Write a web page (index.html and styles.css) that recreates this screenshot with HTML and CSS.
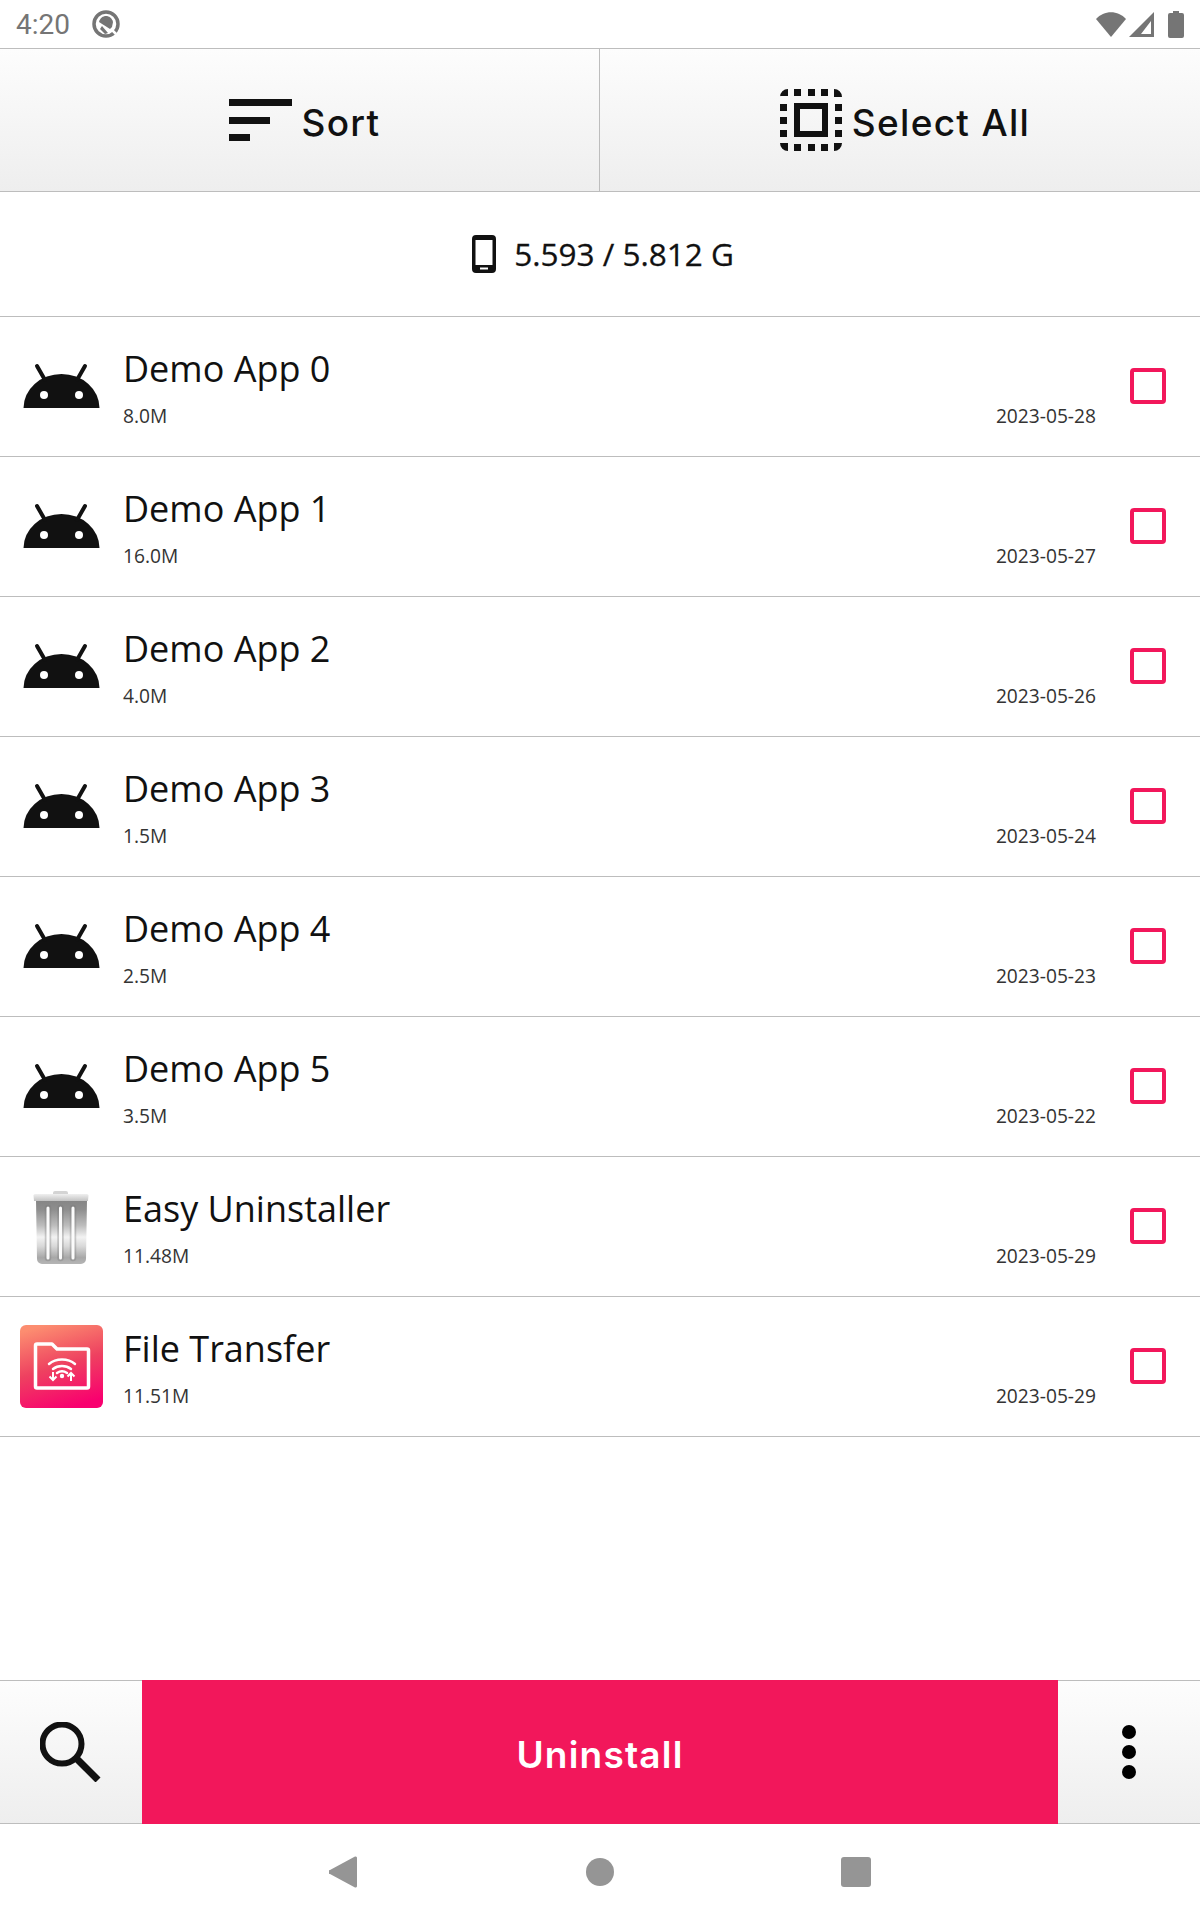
FILE: index.html
```html
<!DOCTYPE html>
<html lang="en">
<head>
  <meta charset="UTF-8">
  <meta name="viewport" content="width=device-width, initial-scale=1.0">
  <title>Easy Uninstaller</title>
  <link rel="stylesheet" href="styles.css">
</head>
<body>
  <svg class="defs" width="0" height="0">
    <symbol id="android" viewBox="0 0 84 84">
      <path d="M3.500 63a38 34 0 0 1 76 0z"/>
      <path d="M17 21l8 14M65 21l-8 14" stroke="#111" stroke-width="4" stroke-linecap="round"/>
      <circle cx="24" cy="50" r="4" fill="#fff"/>
      <circle cx="59" cy="50" r="4" fill="#fff"/>
    </symbol>
  </svg>

  <div class="app">
    <div class="status-bar">
      <div class="status-left">
        <span class="clock">4:20</span>
        <svg width="30" height="30" viewBox="0 0 30 30">
          <circle cx="15" cy="15" r="12" fill="none" stroke="#757575" stroke-width="3.500"/>
          <path d="M8 13c1-4 4-6 7-6s6 2 7 6l-1 5-2 2z" fill="#757575"/>
          <path d="M9 20l2-3 6 7-3 1z" fill="#757575"/>
          <path d="M21 21l4 4" stroke="#fff" stroke-width="2.500"/>
        </svg>
      </div>
      <div class="status-right">
        <svg width="30" height="25" viewBox="0 0 30 25"><path d="M0 7C8-2 22-2 30 7L15 25z" fill="#757575"/></svg>
        <svg width="25" height="25" viewBox="0 0 25 25"><path d="M25 0v25H0zM22 9L12 22h10z" fill="#757575" fill-rule="evenodd"/></svg>
        <svg width="16" height="27" viewBox="0 0 16 27"><path d="M5 0h6v2h3a2 2 0 0 1 2 2v21a2 2 0 0 1-2 2H2a2 2 0 0 1-2-2V4a2 2 0 0 1 2-2h3z" fill="#757575"/></svg>
      </div>
    </div>

    <div class="toolbar">
      <button class="tool-btn">
        <svg width="63" height="42" viewBox="0 0 63 42">
          <rect y="0" width="63" height="7"/>
          <rect y="18" width="41" height="7"/>
          <rect y="35" width="21" height="7"/>
        </svg>
        <span>Sort</span>
      </button>
      <button class="tool-btn">
        <svg width="62" height="62" viewBox="0 0 62 62">
          <path d="M0 8a8 8 0 0 1 8-8v7H0zM54 0a8 8 0 0 1 8 8h-8zM0 54h8v8a8 8 0 0 1-8-8zM54 54h8a8 8 0 0 1-8 8z"/>
          <path d="M14 0h7v7h-7zM28 0h7v7h-7zM41 0h7v7h-7zM14 55h7v7h-7zM28 55h7v7h-7zM41 55h7v7h-7zM0 15h7v7H0zM0 28h7v7H0zM0 41h7v7H0zM55 15h7v7h-7zM55 28h7v7h-7zM55 41h7v7h-7z"/>
          <path d="M14 14h34v34H14zM20 20v22h22V20z" fill-rule="evenodd"/>
        </svg>
        <span>Select All</span>
      </button>
    </div>

    <div class="storage">
      <svg width="24" height="38" viewBox="0 0 24 38">
        <path d="M4 0h16a4 4 0 0 1 4 4v30a4 4 0 0 1-4 4H4a4 4 0 0 1-4-4V4a4 4 0 0 1 4-4zM3.500 5v25h17V5zM8 32.500v2h8v-2z" fill="#111" fill-rule="evenodd"/>
      </svg>
      <span class="storage-text">5.593 / 5.812 G</span>
    </div>

    <ul class="app-list">
      <li class="app-row">
        <svg class="app-icon"><use href="#android"/></svg>
        <div class="app-info">
          <div class="app-name">Demo App 0</div>
          <div class="app-meta"><span>8.0M</span><span>2023-05-28</span></div>
        </div>
        <span class="checkbox"></span>
      </li>
      <li class="app-row">
        <svg class="app-icon"><use href="#android"/></svg>
        <div class="app-info">
          <div class="app-name">Demo App 1</div>
          <div class="app-meta"><span>16.0M</span><span>2023-05-27</span></div>
        </div>
        <span class="checkbox"></span>
      </li>
      <li class="app-row">
        <svg class="app-icon"><use href="#android"/></svg>
        <div class="app-info">
          <div class="app-name">Demo App 2</div>
          <div class="app-meta"><span>4.0M</span><span>2023-05-26</span></div>
        </div>
        <span class="checkbox"></span>
      </li>
      <li class="app-row">
        <svg class="app-icon"><use href="#android"/></svg>
        <div class="app-info">
          <div class="app-name">Demo App 3</div>
          <div class="app-meta"><span>1.5M</span><span>2023-05-24</span></div>
        </div>
        <span class="checkbox"></span>
      </li>
      <li class="app-row">
        <svg class="app-icon"><use href="#android"/></svg>
        <div class="app-info">
          <div class="app-name">Demo App 4</div>
          <div class="app-meta"><span>2.5M</span><span>2023-05-23</span></div>
        </div>
        <span class="checkbox"></span>
      </li>
      <li class="app-row">
        <svg class="app-icon"><use href="#android"/></svg>
        <div class="app-info">
          <div class="app-name">Demo App 5</div>
          <div class="app-meta"><span>3.5M</span><span>2023-05-22</span></div>
        </div>
        <span class="checkbox"></span>
      </li>
      <li class="app-row">
        <svg class="app-icon" viewBox="0 0 84 84">
          <defs>
            <linearGradient id="metal" x1="0" y1="0" x2="0" y2="1">
              <stop offset="0" stop-color="#858585"/>
              <stop offset="0.15" stop-color="#8e8e8e"/>
              <stop offset="0.4" stop-color="#bdbdbd"/>
              <stop offset="0.58" stop-color="#f2f2f2"/>
              <stop offset="0.72" stop-color="#d9d9d9"/>
              <stop offset="0.9" stop-color="#a8a8a8"/>
              <stop offset="1" stop-color="#b5b5b5"/>
            </linearGradient>
            <linearGradient id="lid" x1="0" y1="0" x2="0" y2="1">
              <stop offset="0" stop-color="#f0f0f0"/>
              <stop offset="1" stop-color="#c2c2c2"/>
            </linearGradient>
          </defs>
          <path d="M33 10V8a2 2 0 0 1 2-2h11a2 2 0 0 1 2 2v2z" fill="#d4d4d4"/>
          <path d="M16 15h51l-1 59a5 5 0 0 1-5 5H22a5 5 0 0 1-5-5z" fill="url(#metal)"/>
          <path d="M15 9h52a1.500 1.500 0 0 1 1.500 1.500L68 16H14l-.500-5.500A1.500 1.500 0 0 1 15 9z" fill="url(#lid)"/>
          <path d="M28 23v50M40.500 23v50M53 23v50" stroke="#777" stroke-opacity="0.350" stroke-width="6.500" stroke-linecap="round"/>
          <path d="M28 23v50M40.500 23v50M53 23v50" stroke="#fbfbfb" stroke-width="3" stroke-linecap="round"/>
        </svg>
        <div class="app-info">
          <div class="app-name">Easy Uninstaller</div>
          <div class="app-meta"><span>11.48M</span><span>2023-05-29</span></div>
        </div>
        <span class="checkbox"></span>
      </li>
      <li class="app-row">
        <svg class="app-icon" viewBox="0 0 84 84">
          <defs>
            <linearGradient id="pinkish" x1="0.3" y1="0" x2="0.6" y2="1">
              <stop offset="0" stop-color="#fc8d70"/>
              <stop offset="0.5" stop-color="#ee4160"/>
              <stop offset="1" stop-color="#f9006f"/>
            </linearGradient>
          </defs>
          <rect width="83" height="83" rx="6" fill="url(#pinkish)"/>
          <path d="M17 19h15l5 5h30a1.500 1.500 0 0 1 1.500 1.500v36a1.500 1.500 0 0 1-1.500 1.500H17a1.500 1.500 0 0 1-1.500-1.500v-41A1.500 1.500 0 0 1 17 19z" fill="none" stroke="#fff" stroke-width="3.500" stroke-linejoin="round"/>
          <path d="M29 39c7-6 19-6 26 0M33 44c5-4 13-4 18 0M37 48c3-2 7-2 10 0" fill="none" stroke="#fff" stroke-width="2.500" stroke-linecap="round"/>
          <circle cx="42" cy="51" r="2.200" fill="#fff"/>
          <path d="M33 47v8M29.500 51.500l3.500 3.500 3.500-3.500M51 56v-8M47.500 51.500l3.500-3.500 3.500 3.500" fill="none" stroke="#fff" stroke-width="2"/>
        </svg>
        <div class="app-info">
          <div class="app-name">File Transfer</div>
          <div class="app-meta"><span>11.51M</span><span>2023-05-29</span></div>
        </div>
        <span class="checkbox"></span>
      </li>
    </ul>

    <div class="bottom-bar">
      <button class="side-btn">
        <svg width="62" height="60" viewBox="0 0 62 60">
          <circle cx="22" cy="22" r="19.500" fill="none" stroke="#111" stroke-width="6"/>
          <path d="M37 37l21 21" stroke="#111" stroke-width="7"/>
        </svg>
      </button>
      <button class="uninstall-btn"><span>Uninstall</span></button>
      <button class="side-btn">
        <svg width="14" height="54" viewBox="0 0 14 54">
          <circle cx="7" cy="7" r="7"/>
          <circle cx="7" cy="27" r="7"/>
          <circle cx="7" cy="47" r="7"/>
        </svg>
      </button>
    </div>

    <div class="nav-bar">
      <svg class="nav-back" width="28" height="32" viewBox="0 0 28 32"><path d="M1 14L26 0.500a1.500 1.500 0 0 1 2 1.500v28a1.500 1.500 0 0 1-2 1.500L1 18a2 2 0 0 1 0-4z" fill="#959595"/></svg>
      <span class="nav-home"></span>
      <span class="nav-recent"></span>
    </div>
  </div>
</body>
</html>
```

FILE: styles.css
```css
* {
  box-sizing: border-box;
}
body {
  margin: 0;
  background: #fff;
  font-family: "Open Sans", sans-serif;
  color: #111;
}
.defs {
  display: block;
  position: absolute;
}
.app {
  display: flex;
  flex-direction: column;
  width: 1200px;
  height: 1920px;
}
button {
  border: none;
  padding: 0;
  font: inherit;
  color: inherit;
  background: none;
}

/* status bar */
.status-bar {
  display: flex;
  justify-content: space-between;
  align-items: center;
  height: 49px;
  padding: 0 16px;
  border-bottom: 1px solid #bdbdbd;
}
.status-left {
  display: flex;
  align-items: center;
  gap: 21px;
}
.clock {
  font-family: Roboto, sans-serif;
  font-size: 28px;
  color: #757575;
}
.status-right {
  display: flex;
  align-items: center;
  gap: 3px;
}
.status-right svg:last-child {
  margin-left: 11px;
}

/* sort / select all */
.toolbar {
  display: flex;
  height: 143px;
  border-bottom: 1px solid #bdbdbd;
  background: linear-gradient(#fdfdfd, #eeeeee);
}
.tool-btn {
  flex: none;
  width: 50%;
  display: flex;
  justify-content: center;
  align-items: center;
  gap: 10px;
  padding-left: 10px;
  font-family: Inter, sans-serif;
  font-size: 37px;
  font-weight: 500;
  letter-spacing: 1.300px;
}
.tool-btn span {
  padding-top: 5px;
}
.tool-btn:first-child {
  border-right: 1px solid #bdbdbd;
}
.tool-btn svg {
  fill: #111;
}

.storage {
  display: flex;
  justify-content: center;
  align-items: center;
  gap: 18px;
  height: 125px;
  padding-left: 6px;
  border-bottom: 1px solid #bdbdbd;
  font-size: 31.500px;
}
.storage-text {
  padding-bottom: 2px;
  -webkit-text-stroke: 0.3px #111;
}

/* app rows */
.app-list {
  flex: 1;
  list-style: none;
  margin: 0;
  padding: 0;
}
.app-row {
  display: flex;
  align-items: center;
  height: 140px;
  padding-left: 20px;
  padding-right: 34px;
  border-bottom: 1px solid #bdbdbd;
}
.app-icon {
  flex: none;
  width: 84px;
  height: 84px;
  fill: #111;
}
.app-info {
  flex: 1;
  padding-left: 19px;
  padding-right: 34px;
}
.app-name {
  font-size: 36px;
  line-height: 48px;
}
.app-meta {
  display: flex;
  justify-content: space-between;
  margin-top: 10px;
  font-size: 19.200px;
  line-height: 26px;
  color: #333;
}
.checkbox {
  flex: none;
  width: 36px;
  height: 36px;
  margin-bottom: 2px;
  border: 4px solid #f2175b;
  border-radius: 4px;
}

/* bottom actions */
.bottom-bar {
  display: flex;
  height: 144px;
  border-top: 1px solid #bdbdbd;
  border-bottom: 1px solid #bdbdbd;
  background: linear-gradient(#fdfdfd, #eeeeee);
}
.side-btn {
  flex: 1;
  display: flex;
  justify-content: center;
  align-items: center;
}
.uninstall-btn {
  flex: none;
  width: 916px;
  margin: -1px 0;
  background: #f2175b;
  color: #fff;
  font-family: Inter, sans-serif;
  font-size: 37px;
  font-weight: 600;
  letter-spacing: 1.200px;
}
.uninstall-btn span {
  display: block;
  padding-top: 5px;
}

/* android nav */
.nav-bar {
  display: flex;
  align-items: center;
  justify-content: center;
  gap: 227px;
  height: 96px;
}
.nav-back {
  margin-right: 2px;
}
.nav-home {
  width: 28px;
  height: 28px;
  border-radius: 50%;
  background: #959595;
}
.nav-recent {
  width: 30px;
  height: 30px;
  border-radius: 3px;
  background: #959595;
}
```
